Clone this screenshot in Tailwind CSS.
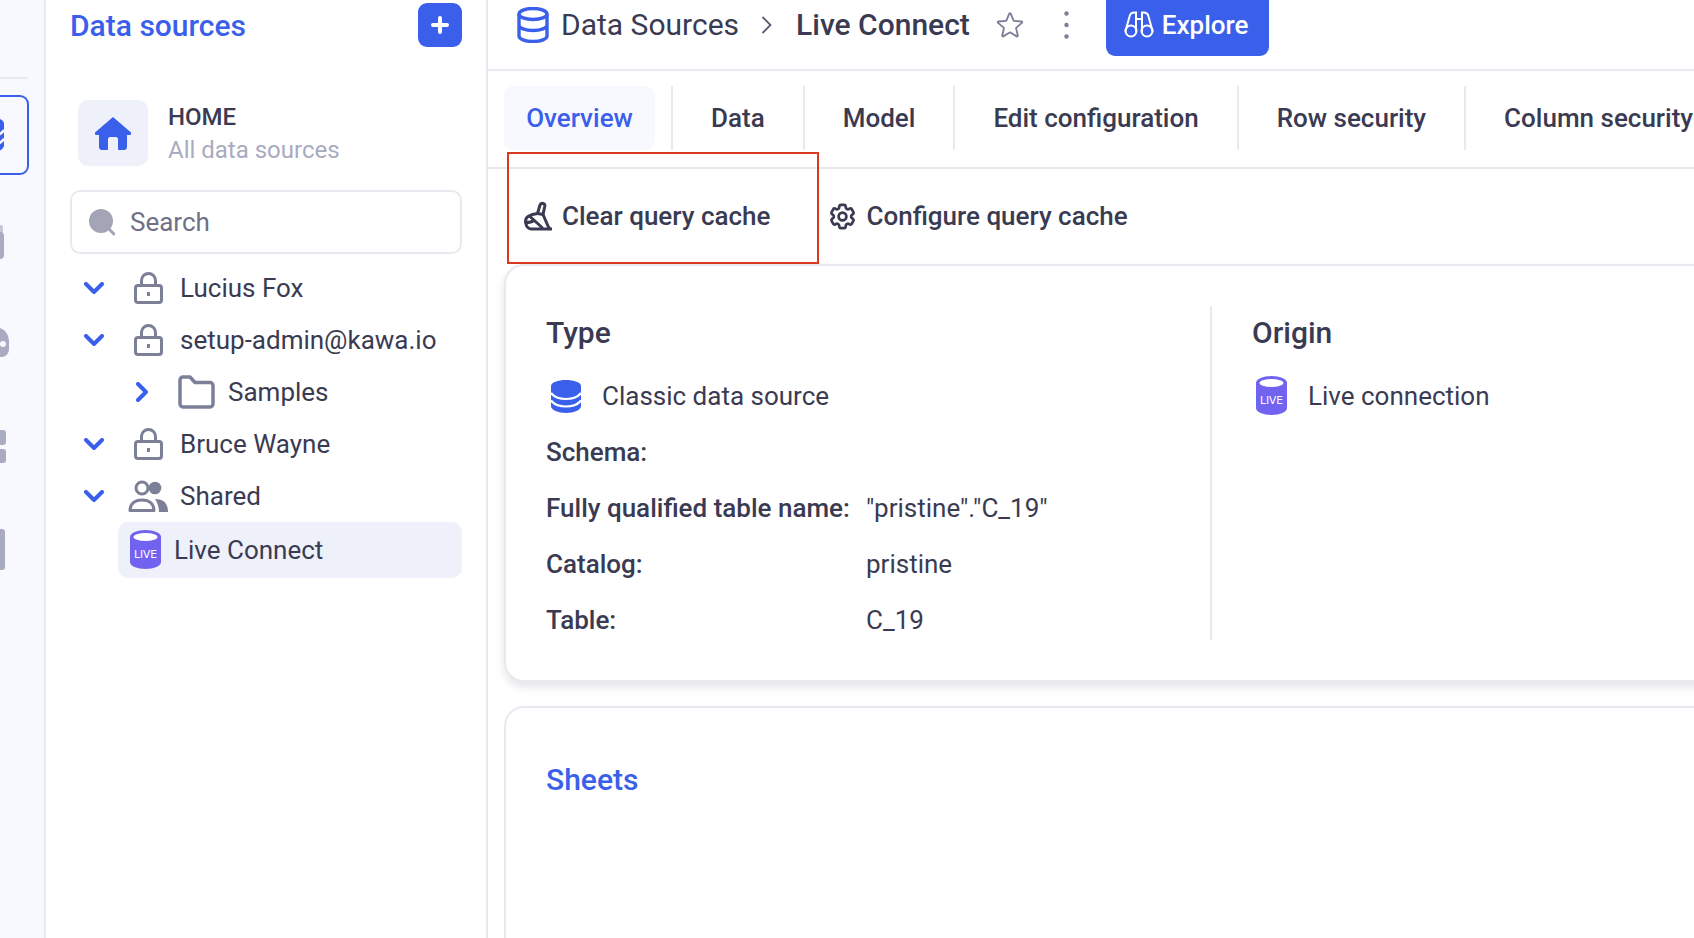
<!DOCTYPE html>
<html lang="en">
<head>
<meta charset="utf-8">
<title>Live Connect</title>
<script src="https://cdn.jsdelivr.net/npm/@tailwindcss/browser@4"></script>
</head>
<body class="bg-white">
<div class="relative flex h-[938px] w-[1694px] overflow-hidden bg-white font-['Roboto',sans-serif] text-[26px] text-[#3a3b52]">

  <!-- icon rail -->
  <aside class="flex h-full w-[46px] shrink-0 flex-col items-start overflow-hidden border-r-2 border-[#e9e9f0] bg-[#f8f9fe]">
    <div class="mt-[77px] h-[2px] w-[28px] shrink-0 bg-[#e9e9f0]"></div>
    <div class="mt-[16px] flex h-[80px] w-[29px] shrink-0 items-center justify-end rounded-r-[9px] border-2 border-l-0 border-[#3a60eb] pr-[23px]">
      <svg class="h-[36px] w-[30px] shrink-0" viewBox="0 0 30 33" preserveAspectRatio="none"><path fill="#3a60eb" d="M0 6C0 2.500 7 0 15 0s15 2.500 15 6v20c0 4-7 7-15 7S0 30 0 26z"/><path fill="none" stroke="#f8f9fe" stroke-width="2.500" d="M0 12c3 4 9 6 15 6s12-2 15-6M0 20c3 4 9 6 15 6s12-2 15-6"/></svg>
    </div>
    <svg class="-ml-[26px] mt-[50px] h-[34px] w-[30px] shrink-0" viewBox="0 0 30 34" fill="#a9abc0"><rect x="20" y="0" width="9" height="10" rx="2" fill="#c6c7d6"/><rect x="0" y="7" width="30" height="27" rx="4"/></svg>
    <svg class="-ml-[22px] mt-[68px] h-[30px] w-[31px] shrink-0" viewBox="0 0 31 30" fill="#a9abc0"><path d="M0 15C0 6 7 0 16 0s15 6 15 15v7c0 4-3 8-7 8H0z"/><circle cx="25" cy="17" r="3" fill="#f8f9fe"/></svg>
    <div class="-ml-[26px] mt-[73px] grid w-[32px] shrink-0 grid-cols-2 gap-[4px]">
      <div class="h-[15px] rounded-[3px] bg-[#a9abc0]"></div><div class="h-[15px] rounded-[3px] bg-[#a9abc0]"></div>
      <div class="h-[14px] rounded-[3px] bg-[#a9abc0]"></div><div class="h-[14px] rounded-[3px] bg-[#a9abc0]"></div>
    </div>
    <div class="-ml-[26px] mt-[66px] h-[41px] w-[31px] shrink-0 rounded-[3px] bg-[#a9abc0]"></div>
  </aside>

  <!-- sidebar -->
  <aside class="flex h-full w-[442px] shrink-0 flex-col border-r-2 border-[#e9e9f0] pr-[24px] pl-[24px]">
    <div class="mt-[3px] flex h-[44px] items-center justify-between">
      <h1 class="text-[30px] font-medium text-[#3a60eb]">Data sources</h1>
      <button class="flex h-[44px] w-[44px] items-center justify-center rounded-[9px] bg-[#3a60eb]">
        <svg class="h-[18px] w-[18px]" viewBox="0 0 18 18" fill="none" stroke="#fff" stroke-width="4" stroke-linecap="round"><path d="M9 2v14M2 9h14"/></svg>
      </button>
    </div>

    <div class="mt-[53px] ml-[8px] flex h-[66px] items-center gap-[20px]">
      <div class="flex h-[66px] w-[70px] items-center justify-center rounded-[10px] bg-[#eef1f9]">
        <svg class="h-[33px] w-[36px]" viewBox="0 0 36 33" fill="#3a60eb"><path d="M18 0 36 15.500c.6 1.200-.2 2.500-1.500 2.500H32v12c0 1.700-1.300 3-3 3h-5c-.6 0-1-.4-1-1V22c0-1-1-2-2-2h-6c-1 0-2 1-2 2v10c0 .6-.4 1-1 1H7c-1.700 0-3-1.300-3-3V18H1.500C.2 18-.6 16.700 0 15.500z"/></svg>
      </div>
      <div class="flex flex-col self-start">
        <span class="text-[24px] leading-[35px] font-medium">HOME</span>
        <span class="text-[24px] leading-[30px] text-[#a9abc0]">All data sources</span>
      </div>
    </div>

    <div class="mt-[24px] flex h-[64px] items-center gap-[15px] rounded-[10px] border-2 border-[#e9e9f0] pl-[17px]">
      <svg class="h-[27px] w-[26px]" viewBox="0 0 26 27" fill="#a3a4b5"><circle cx="12" cy="12" r="12"/><path d="m19 19 6 6" stroke="#a3a4b5" stroke-width="3" stroke-linecap="round"/></svg>
      <span class="text-[#6e7087]">Search</span>
    </div>

    <ul class="mt-[8px] flex flex-col">
      <li class="flex h-[52px] items-center pl-[14px]">
        <svg class="h-[12px] w-[20px]" viewBox="0 0 20 12" fill="none" stroke="#3a60eb" stroke-width="4" stroke-linecap="round" stroke-linejoin="round"><path d="m2 2 8 8 8-8"/></svg>
        <svg class="ml-[30px] h-[32px] w-[29px]" viewBox="0 0 29 32" fill="none" stroke="#7c7f98" stroke-width="3" stroke-linejoin="round"><rect x="1.500" y="13.500" width="26" height="17" rx="2.500"/><path d="M7.500 13.500V8.500a7 7 0 0 1 14 0v5"/><path d="M14.500 20v4"/></svg>
        <span class="ml-[17px]">Lucius Fox</span>
      </li>
      <li class="flex h-[52px] items-center pl-[14px]">
        <svg class="h-[12px] w-[20px]" viewBox="0 0 20 12" fill="none" stroke="#3a60eb" stroke-width="4" stroke-linecap="round" stroke-linejoin="round"><path d="m2 2 8 8 8-8"/></svg>
        <svg class="ml-[30px] h-[32px] w-[29px]" viewBox="0 0 29 32" fill="none" stroke="#7c7f98" stroke-width="3" stroke-linejoin="round"><rect x="1.500" y="13.500" width="26" height="17" rx="2.500"/><path d="M7.500 13.500V8.500a7 7 0 0 1 14 0v5"/><path d="M14.500 20v4"/></svg>
        <span class="ml-[17px]">setup-admin@kawa.io</span>
      </li>
      <li class="flex h-[52px] items-center pl-[66px]">
        <svg class="h-[20px] w-[12px]" viewBox="0 0 12 20" fill="none" stroke="#3a60eb" stroke-width="4" stroke-linecap="round" stroke-linejoin="round"><path d="m2 2 8 8-8 8"/></svg>
        <svg class="ml-[30px] h-[34px] w-[37px]" viewBox="0 0 37 34" fill="none" stroke="#7c7f98" stroke-width="3.500" stroke-linejoin="round"><path d="M2 5a3 3 0 0 1 3-3h7l5 5.500h15a3 3 0 0 1 3 3V29a3 3 0 0 1-3 3H5a3 3 0 0 1-3-3z"/></svg>
        <span class="ml-[13px]">Samples</span>
      </li>
      <li class="flex h-[52px] items-center pl-[14px]">
        <svg class="h-[12px] w-[20px]" viewBox="0 0 20 12" fill="none" stroke="#3a60eb" stroke-width="4" stroke-linecap="round" stroke-linejoin="round"><path d="m2 2 8 8 8-8"/></svg>
        <svg class="ml-[30px] h-[32px] w-[29px]" viewBox="0 0 29 32" fill="none" stroke="#7c7f98" stroke-width="3" stroke-linejoin="round"><rect x="1.500" y="13.500" width="26" height="17" rx="2.500"/><path d="M7.500 13.500V8.500a7 7 0 0 1 14 0v5"/><path d="M14.500 20v4"/></svg>
        <span class="ml-[17px]">Bruce Wayne</span>
      </li>
      <li class="flex h-[52px] items-center pl-[14px]">
        <svg class="h-[12px] w-[20px]" viewBox="0 0 20 12" fill="none" stroke="#3a60eb" stroke-width="4" stroke-linecap="round" stroke-linejoin="round"><path d="m2 2 8 8 8-8"/></svg>
        <svg class="ml-[24px] h-[32px] w-[40px]" viewBox="0 0 40 32" fill="none" stroke="#7c7f98" stroke-width="3"><circle cx="14" cy="8" r="6"/><path d="M2 30.500C2 23.500 7 20 14 20s12 3.500 12 10.500z" stroke-linejoin="round"/><circle cx="27" cy="8" r="6.300" fill="#7c7f98" stroke="none"/><path d="M27 19c7 0 13 3 13 13h-9c0-5-1.500-9-4-13z" fill="#7c7f98" stroke="none"/></svg>
        <span class="ml-[12px]">Shared</span>
      </li>
      <li class="ml-[48px] flex h-[56px] items-center rounded-[10px] bg-[#eef1f9] pl-[12px]">
        <svg class="-mt-[2px] h-[39px] w-[31px]" viewBox="0 0 31 39" fill="#7163f0"><path d="M0 7C0 3 7 0 15.500 0S31 3 31 7v25c0 4-7 7-15.500 7S0 36 0 32z"/><ellipse cx="15.500" cy="7" rx="12" ry="4" fill="#fff"/><text x="15.500" y="28" text-anchor="middle" font-family="DejaVu Sans, sans-serif" font-size="10.500" textLength="23" lengthAdjust="spacingAndGlyphs" fill="#fff">LIVE</text></svg>
        <span class="ml-[13px]">Live Connect</span>
      </li>
    </ul>
  </aside>

  <!-- main -->
  <main class="flex h-full min-w-0 flex-1 flex-col overflow-hidden">
    <header class="flex h-[71px] shrink-0 items-start border-b-2 border-[#e9e9f0] pl-[29px] whitespace-nowrap">
      <div class="flex h-[49px] shrink-0 items-center">
        <svg class="h-[36px] w-[32px]" viewBox="0 0 32 36" fill="none" stroke="#3a60eb" stroke-width="3.400"><ellipse cx="16" cy="7" rx="14" ry="5.500"/><path d="M2 7v22c0 3 6 5.500 14 5.500s14-2.500 14-5.500V7M2 18c0 3 6 5.500 14 5.500s14-2.500 14-5.500"/></svg>
        <span class="ml-[12px] text-[30px]">Data Sources</span>
        <svg class="ml-[22px] h-[18px] w-[11px]" viewBox="0 0 11 18" fill="none" stroke="#5a5c72" stroke-width="1.800"><path d="m1.500 1 8 8-8 8"/></svg>
        <span class="ml-[24px] text-[30px] font-medium">Live Connect</span>
        <svg class="ml-[24px] h-[32px] w-[32px]" viewBox="0 0 24 24" fill="none" stroke="#7c7f98" stroke-width="1.400"><path d="M11.480 3.499a.562.562 0 0 1 1.040 0l2.125 5.111a.563.563 0 0 0 .475.345l5.518.442c.499.040.701.663.321.988l-4.204 3.602a.563.563 0 0 0-.182.557l1.285 5.385a.562.562 0 0 1-.84.610l-4.725-2.885a.562.562 0 0 0-.586 0L6.982 20.540a.562.562 0 0 1-.84-.610l1.285-5.386a.562.562 0 0 0-.182-.557l-4.204-3.602a.562.562 0 0 1 .321-.988l5.518-.442a.563.563 0 0 0 .475-.345L11.480 3.500Z"/></svg>
        <svg class="ml-[38px] h-[28px] w-[5px]" viewBox="0 0 5 28" fill="#7c7f98"><circle cx="2.500" cy="2.500" r="2.200"/><circle cx="2.500" cy="14" r="2.200"/><circle cx="2.500" cy="25.500" r="2.200"/></svg>
      </div>
      <button class="ml-[37px] flex h-[56px] w-[163px] shrink-0 items-center rounded-b-[9px] bg-[#3a60eb] pb-[6px] pl-[18px] text-white">
        <svg class="h-[28px] w-[30px]" viewBox="0 0 30 28" fill="none" stroke="#fff" stroke-width="2" stroke-linecap="round"><circle cx="7" cy="20" r="5.500"/><circle cx="23" cy="20" r="5.500"/><path d="M1.500 20 5.500 5.500C6 3 8 1.500 10.500 1.500H12v19M28.500 20l-4-14.500C24 3 22 1.500 19.500 1.500H18v19M12 8h6"/></svg>
        <span class="ml-[8px] font-medium">Explore</span>
      </button>
    </header>

    <nav class="flex h-[98px] shrink-0 border-b-2 border-[#e9e9f0] pt-[15px] pl-[16px] font-medium whitespace-nowrap">
      <div class="flex h-[64px] w-[151px] shrink-0 items-center justify-center rounded-[9px] bg-[#f8f9fe] pt-[1px] text-[#3a60eb]">Overview</div>
      <div class="ml-[16px] flex h-[64px] shrink-0 items-center border-x-2 border-[#e9e9f0] pt-[1px] pr-[38px] pl-[38px]">Data</div>
      <div class="flex h-[64px] shrink-0 items-center border-r-2 border-[#e9e9f0] px-[38px] pt-[1px]">Model</div>
      <div class="flex h-[64px] shrink-0 items-center border-r-2 border-[#e9e9f0] px-[38px] pt-[1px]">Edit configuration</div>
      <div class="flex h-[64px] shrink-0 items-center border-r-2 border-[#e9e9f0] px-[38px] pt-[1px]">Row security</div>
      <div class="flex h-[64px] shrink-0 items-center pt-[1px] pl-[38px]">Column security</div>
    </nav>

    <div class="flex h-[96px] shrink-0 items-center pb-[2px] font-medium whitespace-nowrap">
      <svg class="ml-[36px] h-[30px] w-[28px]" viewBox="0 0 28 30" fill="none" stroke="#3a3b52" stroke-width="3" stroke-linejoin="round" stroke-linecap="round"><path d="M16 4a2.500 2.500 0 0 1 4.800 1.300L19 13.500 24 25q1 2.500 3 3H7Q3 27.500 2 23 .5 18 4 15.500q4-2.500 9.500-3z"/><path d="m6 15.500 12 11M13.500 12.500l5.500 1M2 21.500c3 0 6-.5 8-2"/></svg>
      <span class="ml-[10px]">Clear query cache</span>
      <svg class="ml-[57px] h-[31px] w-[31px]" viewBox="0 0 24 24" fill="none" stroke="#3a3b52" stroke-width="2.100"><path d="M9.594 3.940c.090-.542.560-.94 1.110-.94h2.593c.550 0 1.020.398 1.110.94l.213 1.281c.063.374.313.686.645.870.074.040.147.083.220.127.325.196.720.257 1.075.124l1.217-.456a1.125 1.125 0 0 1 1.370.490l1.296 2.247a1.125 1.125 0 0 1-.260 1.431l-1.003.827c-.293.241-.438.613-.430.992a7.723 7.723 0 0 1 0 .255c-.008.378.137.750.430.991l1.004.827c.424.350.534.955.260 1.430l-1.298 2.247a1.125 1.125 0 0 1-1.369.491l-1.217-.456c-.355-.133-.750-.072-1.076.124a6.470 6.470 0 0 1-.220.128c-.331.183-.581.495-.644.869l-.213 1.281c-.090.543-.560.94-1.110.94h-2.594c-.550 0-1.019-.398-1.110-.94l-.213-1.281c-.062-.374-.312-.686-.644-.870a6.520 6.520 0 0 1-.220-.127c-.325-.196-.720-.257-1.076-.124l-1.217.456a1.125 1.125 0 0 1-1.369-.490l-1.297-2.247a1.125 1.125 0 0 1 .260-1.431l1.004-.827c.292-.240.437-.613.430-.991a6.932 6.932 0 0 1 0-.255c.007-.380-.138-.751-.430-.992l-1.004-.827a1.125 1.125 0 0 1-.260-1.430l1.297-2.247a1.125 1.125 0 0 1 1.370-.491l1.216.456c.356.133.751.072 1.076-.124.072-.044.146-.086.220-.128.332-.183.582-.495.644-.869l.214-1.280Z"/><path d="M15 12a3 3 0 1 1-6 0 3 3 0 0 1 6 0Z"/></svg>
      <span class="ml-[8px]">Configure query cache</span>
    </div>

    <section class="-mt-px ml-[16px] h-[418px] w-[1400px] shrink-0 rounded-[20px] border-2 border-[#e9e9f0] bg-white pt-[40px] pl-[40px] shadow-[0_5px_8px_rgba(40,40,70,0.12)]">
      <div class="flex h-[334px]">
        <div class="w-[666px] shrink-0 border-r-2 border-[#e9e9f0]">
          <h2 class="flex h-[52px] items-center text-[30px] font-medium">Type</h2>
          <div class="mt-[10px] flex h-[56px] items-center">
            <svg class="ml-[5px] h-[33px] w-[30px]" viewBox="0 0 30 33"><path fill="#3a60eb" d="M0 6C0 2.500 7 0 15 0s15 2.500 15 6v20c0 4-7 7-15 7S0 30 0 26z"/><path fill="none" stroke="#fff" stroke-width="2.200" d="M0 13c3 4 9 6 15 6s12-2 15-6M0 20.500c3 4 9 6 15 6s12-2 15-6"/></svg>
            <span class="ml-[21px]">Classic data source</span>
          </div>
          <div class="flex h-[56px] items-center font-medium"><span class="w-[320px]">Schema:</span></div>
          <div class="flex h-[56px] items-center"><span class="w-[320px] font-medium">Fully qualified table name:</span><span>"pristine"."C_19"</span></div>
          <div class="flex h-[56px] items-center"><span class="w-[320px] font-medium">Catalog:</span><span>pristine</span></div>
          <div class="flex h-[56px] items-center"><span class="w-[320px] font-medium">Table:</span><span>C_19</span></div>
        </div>
        <div class="pl-[40px]">
          <h2 class="flex h-[52px] items-center text-[30px] font-medium">Origin</h2>
          <div class="mt-[10px] flex h-[56px] items-center">
            <svg class="-mt-[2px] ml-[4px] h-[39px] w-[31px]" viewBox="0 0 31 39" fill="#7163f0"><path d="M0 7C0 3 7 0 15.500 0S31 3 31 7v25c0 4-7 7-15.500 7S0 36 0 32z"/><ellipse cx="15.500" cy="7" rx="12" ry="4" fill="#fff"/><text x="15.500" y="28" text-anchor="middle" font-family="DejaVu Sans, sans-serif" font-size="10.500" textLength="23" lengthAdjust="spacingAndGlyphs" fill="#fff">LIVE</text></svg>
            <span class="ml-[21px]">Live connection</span>
          </div>
        </div>
      </div>
    </section>

    <section class="mt-[24px] ml-[16px] h-[400px] w-[1400px] shrink-0 rounded-[20px] border-2 border-[#e9e9f0] bg-white pt-[49px] pl-[40px]">
      <h2 class="text-[30px] font-medium text-[#3a60eb]">Sheets</h2>
    </section>
  </main>

  <!-- annotation -->
  <div class="pointer-events-none absolute top-[152px] left-[507px] h-[112px] w-[312px] border-2 border-[#d93a1f]"></div>
</div>
</body>
</html>
